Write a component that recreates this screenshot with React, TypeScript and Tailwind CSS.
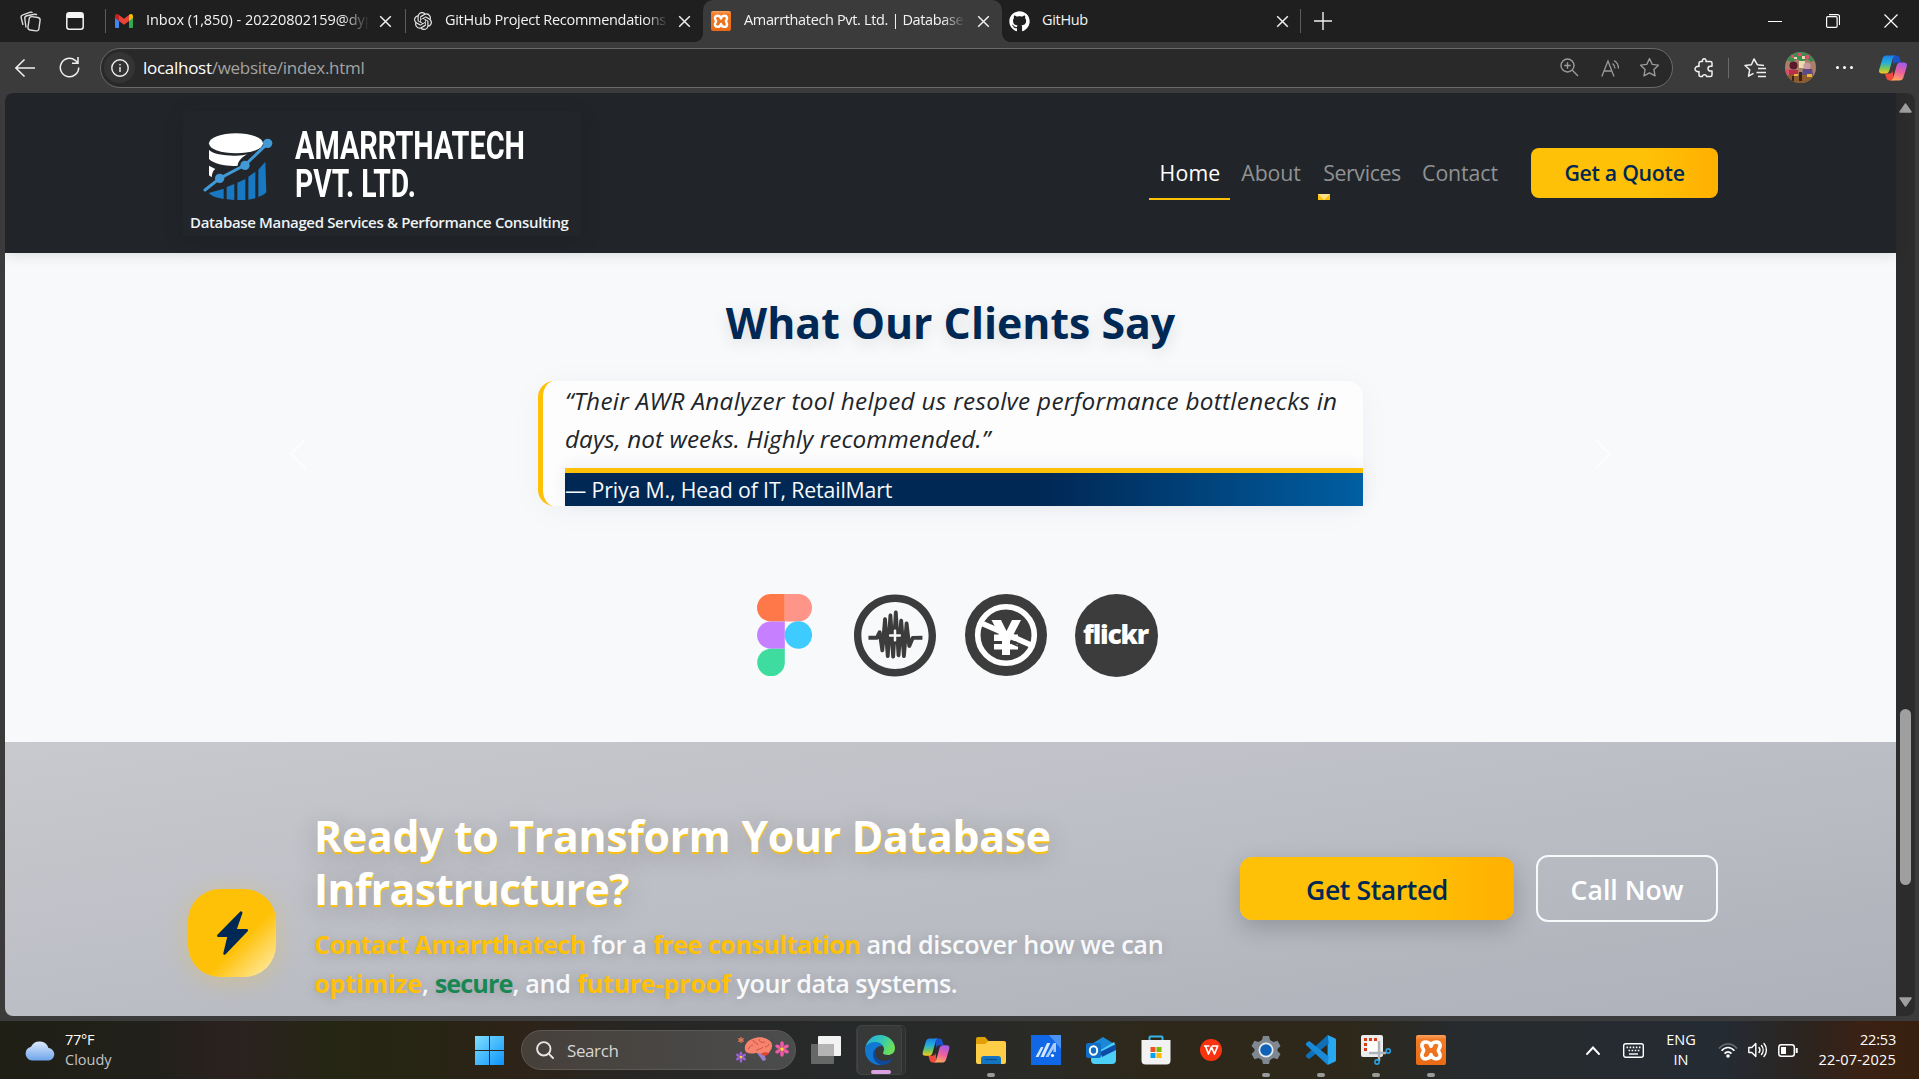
import type { ReactNode } from 'react';
import { FaCreativeCommonsSamplingPlus, FaGithub } from 'react-icons/fa';
import { SiOpenai } from 'react-icons/si';

const CloseX = ({ className = '' }: { className?: string }) => (
  <svg viewBox="0 0 13 13" className={`h-[13px] w-[13px] shrink-0 ${className}`} fill="none" stroke="#f0f0f0" strokeWidth="1.5">
    <path d="M1.2 1.2 11.8 11.8M11.8 1.2 1.2 11.8" />
  </svg>
);

const Sep = ({ className = '' }: { className?: string }) => <div className={`h-6 w-px shrink-0 bg-[#5c5c5c] ${className}`} />;

const FadeTitle = ({ children, className = '' }: { children: ReactNode; className?: string }) => (
  <div className={`mb-[2px] shrink-0 overflow-hidden whitespace-nowrap text-[14.5px] leading-5 text-[#f3f3f3] ${className}`}>{children}</div>
);

const Xampp = ({ className = '' }: { className?: string }) => (
  <div className={`shrink-0 rounded-[2px] bg-linear-to-b from-[#f9a25f] via-[#f47a24] via-15% to-[#e96a14] ${className}`}>
    <svg viewBox="0 0 30 30" className="h-full w-full" fill="none" stroke="#fff" strokeWidth="3.6" strokeLinejoin="round">
      <path d="M15 11.3C14.2 6.4 7 5.4 5.9 10c-.5 2.300 1.700 3.800 1.700 5.400s-2.200 3.100-1.700 5.400c1.100 4.600 8.300 3.600 9.100-1.300.8 4.900 8 5.900 9.100 1.300.5-2.300-1.700-3.800-1.700-5.400s2.200-3.100 1.700-5.400C23 5.400 15.800 6.400 15 11.300z" />
    </svg>
  </div>
);

const Copilot = ({ className = '' }: { className?: string }) => (
  <svg viewBox="0 0 28 26" className={`shrink-0 ${className}`}>
    <defs>
      <linearGradient id="cpa" x1="0" y1="0" x2="0" y2="1">
        <stop offset="0" stopColor="#1c7fe6" />
        <stop offset=".4" stopColor="#23b0d8" />
        <stop offset=".72" stopColor="#7cc758" />
        <stop offset="1" stopColor="#ffc61a" />
      </linearGradient>
      <linearGradient id="cpb" x1=".6" y1="0" x2=".3" y2="1">
        <stop offset="0" stopColor="#a45be8" />
        <stop offset=".5" stopColor="#ee5f9c" />
        <stop offset="1" stopColor="#ffab5c" />
      </linearGradient>
    </defs>
    <path d="M13 0.500h4.500c1.800 0 2.600 1 3.200 2.800L22 7.500h-4c-2 0-3 .9-3.500 2.800z" fill="#1b51c9" />
    <path d="M15 25.500h-4.500c-1.800 0-2.600-1-3.200-2.800L6 18.500h4c2 0 3-.9 3.500-2.800z" fill="#f0493e" />
    <path d="M7.500 0.500h9c-1.800.3-2.500 1.600-3 3.400L10.500 15c-.7 2.400-1.800 3.500-4 3.500H3c-2.600 0-3.500-1.600-2.700-4.200L3.500 3.700C4.200 1.500 5.300.5 7.500.5z" fill="url(#cpa)" />
    <path d="M20.500 25.500h-9c1.800-.3 2.500-1.600 3-3.400L17.500 11c.7-2.400 1.800-3.500 4-3.500H25c2.600 0 3.500 1.600 2.700 4.200l-3.200 10.600c-.7 2.200-1.800 3.200-4 3.200z" fill="url(#cpb)" />
  </svg>
);

function TabStrip() {
  return (
    <div className="flex h-[42px] items-center bg-[#1f1f1f] pl-5 pr-5">
      <svg viewBox="0 0 22 21" className="h-[21px] w-[22px] shrink-0" fill="none" stroke="#dcdcdc" strokeWidth="1.4" strokeLinejoin="round">
        <rect x="8.500" y="6" width="11" height="13.500" rx="2.500" transform="rotate(8 14 13)" />
        <path d="M6 16.500 4.800 7.500a2.500 2.500 0 0 1 2-2.800l8-1.500a2 2 0 0 1 2 1" />
        <path d="M3 14 1.200 6.800a2.500 2.500 0 0 1 1.700-3L10.500 1.200a2 2 0 0 1 2 .6" />
      </svg>
      <svg viewBox="0 0 18 18" className="ml-6 h-[18px] w-[18px] shrink-0">
        <rect x=".8" y=".8" width="16.400" height="16.400" rx="2.500" fill="none" stroke="#f4f4f4" strokeWidth="1.5" />
        <path d="M1 6V3a2 2 0 0 1 2-2h12a2 2 0 0 1 2 2v3z" fill="#f4f4f4" />
      </svg>
      <Sep className="ml-[21px]" />
      <svg viewBox="0 0 18 14" className="ml-[9px] h-[14px] w-[18px] shrink-0">
        <path d="M0 2v10.700C0 13.400.6 14 1.300 14H4V6.500z" fill="#4285f4" />
        <path d="M18 2v10.700c0 .7-.6 1.300-1.300 1.300H14V6.500z" fill="#34a853" />
        <path d="M14 1v6l4-3V2.200C18 .3 16-.5 14.700.500z" fill="#fbbc04" />
        <path d="M4 7V1l5 3.800L14 1v6L9 10.800z" fill="#ea4335" />
        <path d="M0 2.200V4l4 3V1L3.300.5C2-.5 0 .3 0 2.200z" fill="#c5221f" />
      </svg>
      <FadeTitle className="ml-[13px] w-[223px] tracking-[-0.04px] mask-r-from-88% mask-r-to-100%">Inbox (1,850) - 20220802159@dyp</FadeTitle>
      <CloseX className="ml-[10px]" />
      <Sep className="ml-[13px]" />
      <SiOpenai className="ml-2 h-[18px] w-[18px] shrink-0 text-[#e8e8e8]" />
      <FadeTitle className="ml-[13px] w-[223px] tracking-[-0.29px] mask-r-from-90% mask-r-to-100%">GitHub Project Recommendations</FadeTitle>
      <CloseX className="ml-[10px]" />
      <div className="relative ml-[12px] flex h-full w-[299px] shrink-0 items-center rounded-t-[10px] bg-[#3b3b3b] pl-2">
        <div className="absolute -left-2 bottom-0 h-2 w-2 bg-[radial-gradient(circle_at_0_0,#1f1f1f_7.5px,#3b3b3b_8px)]" />
        <div className="absolute -right-2 bottom-0 h-2 w-2 bg-[radial-gradient(circle_at_100%_0,#1f1f1f_7.5px,#3b3b3b_8px)]" />
        <Xampp className="h-5 w-5" />
        <FadeTitle className="ml-[13px] w-[221px] tracking-[-0.35px] mask-r-from-90% mask-r-to-100%">Amarrthatech Pvt. Ltd. | Database</FadeTitle>
        <CloseX className="ml-[12px]" />
      </div>
      <FaGithub className="ml-[7px] h-[21px] w-[21px] shrink-0 text-white" />
      <FadeTitle className="ml-[12px] w-[223px] tracking-[-0.32px]">GitHub</FadeTitle>
      <CloseX className="ml-[11px]" />
      <Sep className="ml-[11px]" />
      <svg viewBox="0 0 18 18" className="ml-[13px] h-[18px] w-[18px] shrink-0" stroke="#f0f0f0" strokeWidth="1.4">
        <path d="M9 0v18M0 9h18" />
      </svg>
      <div className="ml-auto flex items-center gap-[44px] pr-px">
        <div className="h-px w-[14px] bg-white" />
        <svg viewBox="0 0 14 14" className="h-[14px] w-[14px]" fill="none" stroke="#fff" strokeWidth="1.2">
          <rect x=".6" y="2.600" width="10.500" height="10.800" rx="1.200" />
          <path d="M3 .6h8.500a2 2 0 0 1 2 2V11" />
        </svg>
        <svg viewBox="0 0 14 14" className="h-[14px] w-[14px]" stroke="#fff" strokeWidth="1.2">
          <path d="M.5.5l13 13M13.500.5l-13 13" />
        </svg>
      </div>
    </div>
  );
}

const STAR = 'M10 1.500l2.600 5.500 5.900.8-4.300 4.200 1.100 6L10 15.100 4.700 18l1.100-6L1.500 7.800 7.400 7z';

function Toolbar() {
  return (
    <div className="flex h-[51px] items-center bg-[#3b3b3b] pl-[15px]">
      <svg viewBox="0 0 20 18" className="h-[18px] w-5 shrink-0" fill="none" stroke="#f0f0f0" strokeWidth="1.5">
        <path d="M20 9H1M9.500.5.9 9l8.600 8.500" />
      </svg>
      <svg viewBox="0 0 21 21" className="ml-[24px] h-[21px] w-[21px] shrink-0" fill="none" stroke="#f0f0f0" strokeWidth="1.5">
        <path d="M19.700 10.500a9.200 9.200 0 1 1-3.500-7.200L19 6M19 0v6.200h-6" />
      </svg>
      <div className="ml-[20px] flex h-10 w-[1573px] shrink-0 items-center rounded-full border border-[#6a6a6a] bg-[#292929] pl-[3px] pr-[12px]">
        <div className="flex h-[31px] w-[31px] items-center justify-center rounded-full bg-[#343434]">
          <svg viewBox="0 0 18 18" className="h-[18px] w-[18px]" fill="none" stroke="#f0f0f0" strokeWidth="1.4">
            <circle cx="9" cy="9" r="8.200" />
            <path d="M9 8v5M9 5v1.500" />
          </svg>
        </div>
        <div className="ml-2 text-[17px] leading-6 tracking-[-0.28px] text-[#a3a3a3]">
          <span className="text-white">localhost</span>/website/index.html
        </div>
        <svg viewBox="0 0 19 19" className="ml-auto h-[19px] w-[19px]" fill="none" stroke="#9a9a9a" strokeWidth="1.4">
          <circle cx="7.500" cy="7.500" r="6.500" />
          <path d="M12.300 12.300 18 18M7.500 4.300v6.400M4.300 7.500h6.400" />
        </svg>
        <svg viewBox="0 0 20 18" className="ml-[22px] h-[18px] w-5" fill="none" stroke="#9a9a9a" strokeWidth="1.3">
          <path d="M.8 17.500 7 2l6 15.500M3 12h8M11.500 4.500a6 6 0 0 1 2.500 5M13 1.500c3 1.800 4.500 4.500 4.500 8" />
        </svg>
        <svg viewBox="0 0 20 20" className="ml-[18px] h-[21px] w-[21px]" fill="none" stroke="#9a9a9a" strokeWidth="1.3" strokeLinejoin="round">
          <path d={STAR} />
        </svg>
      </div>
      <svg viewBox="0 0 20 20" className="ml-[21px] h-[20px] w-[20px] shrink-0" fill="none" stroke="#f0f0f0" strokeWidth="1.5" strokeLinejoin="round">
        <path d="M7 3.500h1.500c-.5-1.500.3-2.700 1.700-2.700s2.200 1.200 1.700 2.700h4.600a1.500 1.500 0 0 1 1.500 1.500v3.300h-1.600a2.400 2.400 0 0 0 0 4.800H18V17a1.500 1.500 0 0 1-1.500 1.500h-4c.2-1-.7-1.700-2-1.700s-2.200.7-2 1.700H6.500A1.500 1.500 0 0 1 5 17v-3.500c-2 .5-4-.6-4-2.500s2-3 4-2.500V5.300c0-1.100.9-1.800 2-1.800z" />
      </svg>
      <div className="ml-[14px] h-5 w-px bg-[#6a6a6a]" />
      <svg viewBox="0 0 22 20" className="ml-[15px] h-5 w-[22px] shrink-0" fill="none" stroke="#f0f0f0" strokeWidth="1.5" strokeLinejoin="round">
        <path d="M20 7.500l-6.700-.8L10 1 7.400 6.700 1 7.500l4.700 4.300-1.200 6.400 5-2.900M14 10.500h8M12.500 14.500h9.500M14 18.500h8" />
      </svg>
      <svg viewBox="0 0 31 31" className="ml-[19px] h-[31px] w-[31px] shrink-0 rounded-full">
        <path d="M0 0h31v31H0z" fill="#a8806a" />
        <path d="M0 0h31v8l-5 2-4-3-5 3-5-3-5 3-7-2z" fill="#3f8a50" />
        <path d="M6 3h3v3H6zM13 1h4v3h-4zM21 3h3v4h-3zM1 17h5v5H1z" fill="#d8506c" />
        <path d="M9 5h3v2H9zM17 4h3v3h-3zM14 9h6v7h-6z" fill="#e8dcae" />
        <circle cx="8.500" cy="13.500" r="4" fill="#5a1a2c" />
        <path d="M4 18h9v6H4z" fill="#b83048" />
        <circle cx="22" cy="14" r="3.600" fill="#c99aa0" />
        <path d="M18 17h9l1 6H17z" fill="#5c4a86" />
        <path d="M3 23h25v8H3z" fill="#8c5c2e" />
        <path d="M14 20h3v9h-3zM7 24h2v5H7z" fill="#3a2418" />
        <path d="M22 22h5v3h-5zM9 22h4v2H9z" fill="#e8b83c" />
      </svg>
      <div className="ml-[20px] flex gap-1">
        <div className="h-[3px] w-[3px] rounded-full bg-white" />
        <div className="h-[3px] w-[3px] rounded-full bg-white" />
        <div className="h-[3px] w-[3px] rounded-full bg-white" />
      </div>
      <Copilot className="ml-[26px] h-[26px] w-[28px]" />
    </div>
  );
}

function BrandLogo() {
  return (
    <div className="h-[125px] w-[398px] bg-[#222529] pt-5 shadow-[0_4px_20px_rgba(0,0,0,0.12)]">
      <div className="flex pl-[19px]">
        <svg viewBox="125 90 216 216" className="h-[72px] w-[72px] shrink-0">
          <ellipse cx="227" cy="127" rx="81" ry="30" fill="#fff" />
          <path d="M146 147c12 12 48 18 81 17 14 0 25-2 34-4-16 8-28 20-29 34-25 3-70-3-86-20z" fill="#fff" />
          <path d="M146 194l19 10c-8 5-10 15-11 25l-8-6z" fill="#fff" />
          <path d="M145 276l45-13v31c-20-3-37-9-45-18z" fill="#1878c2" />
          <path d="M199 258l23-9v48l-23-2zM231 245l24-11v63h-24zM264 227l21-15v80l-21 4zM294 206l21-24 3 92c-6 6-14 11-24 14z" fill="#1878c2" />
          <path d="M134 267l44-35 76-40 68-65" fill="none" stroke="#4199d6" strokeWidth="9" strokeLinecap="round" strokeLinejoin="round" />
          <g fill="#4199d6">
            <circle cx="178" cy="232" r="14" />
            <circle cx="254" cy="193" r="14" />
            <circle cx="322" cy="127" r="14" />
          </g>
        </svg>
        <div className="-mt-[4px] ml-[21px] font-[Roboto,sans-serif] font-bold text-white">
          <div className="w-[310px] origin-left scale-x-[0.74] whitespace-nowrap text-[39px] leading-[38px]">AMARRTHATECH</div>
          <div className="w-[310px] origin-left scale-x-[0.745] whitespace-nowrap text-[38px] leading-[38px]">PVT. LTD.</div>
        </div>
      </div>
      <div className="mt-[9px] pl-[7px] text-[15px] font-semibold leading-5 tracking-[-0.35px] whitespace-nowrap text-[#eef3f5]">
        Database Managed Services &amp; Performance Consulting
      </div>
    </div>
  );
}

function SiteHeader() {
  return (
    <header className="relative z-10 flex h-[160px] items-center rounded-tl-[8px] bg-[#212529] pl-[178px] pr-[178px] shadow-[0_2px_14px_rgba(0,0,0,0.12)]">
      <BrandLogo />
      <nav className="ml-auto flex text-center text-[21.3px] leading-[54px] text-[#909294]">
        <a className="h-[54px] w-[81px] border-b-2 border-[#ffc107] pl-px tracking-[0.2px] text-white">Home</a>
        <a className="w-[82px] tracking-[-0.11px]">About</a>
        <a className="relative w-[99px] pl-px tracking-[-0.37px]">
          Services
          <svg viewBox="0 0 12 6" className="absolute bottom-0 left-[6px] h-[6px] w-3">
            <path d="M0 0h12v6H0z" fill="#ffc107" />
            <path d="M0 0h12L6 6z" fill="#ffe08a" />
          </svg>
        </a>
        <a className="w-[97px] pl-px tracking-[-0.1px]">Contact</a>
      </nav>
      <button className="ml-[23px] h-[50px] w-[187px] rounded-[8px] bg-linear-to-r from-[#ffc107] from-60% to-[#ffb000] text-[21.3px] font-semibold leading-[50px] tracking-[-0.3px] text-[#002855]">
        Get a Quote
      </button>
    </header>
  );
}

function PartnerLogos() {
  return (
    <div className="mt-[88px] flex h-[82px] pl-[752px]">
      <svg viewBox="0 0 55 82" className="h-[82px] w-[55px]">
        <path d="M13.700 0H27.800v27.400H13.700a13.700 13.700 0 0 1 0-27.400z" fill="#ff7849" />
        <path d="M27.800 0h13.500a13.700 13.700 0 0 1 0 27.400H27.800z" fill="#ff9488" />
        <path d="M13.700 27.400H27.800v27.300H13.700a13.650 13.650 0 0 1 0-27.300z" fill="#c680ff" />
        <circle cx="41.400" cy="41" r="13.700" fill="#3ecbff" />
        <path d="M13.700 54.700H27.800v13.600a13.800 13.800 0 1 1-14.100-13.600z" fill="#3fdc9f" />
      </svg>
      <FaCreativeCommonsSamplingPlus className="ml-[42px] -mt-[1.5px] h-[85px] w-[82px] text-[#3c3c3c]" />
      <svg viewBox="0 0 82 82" className="ml-[29px] h-[82px] w-[82px]">
        <circle cx="41" cy="41" r="41" fill="#3c3c3c" />
        <path d="M26.500 26H36l5.500 11L47 26h9L48.500 40.500H53V47h-8v3h8v5.500h-8V61h-8v-5.500h-8V50h8v-3h-8v-6.500h5z" fill="#fff" />
        <path d="M45.500 46.500l20 8.500" stroke="#3c3c3c" strokeWidth="2" />
        <path d="M15 28.500 67 51.500" stroke="#fff" strokeWidth="5.6" />
        <path d="M46 49l7 3" stroke="#3c3c3c" strokeWidth="1.8" />
        <circle cx="41" cy="41" r="28.300" fill="none" stroke="#fff" strokeWidth="5.6" />
      </svg>
      <div className="ml-7 h-[83px] w-[83px] rounded-full bg-[#3c3c3c] pr-[2px] text-center text-[26.5px] font-extrabold leading-[81px] tracking-[-1.2px] text-white">flickr</div>
    </div>
  );
}

const Chevron = ({ d }: { d: string }) => (
  <svg viewBox="0 0 20 32" className="h-8 w-5 opacity-80" fill="none" stroke="#fff" strokeWidth="1.8" strokeLinecap="round">
    <path d={d} />
  </svg>
);

function Testimonials() {
  return (
    <section className="h-[489px] bg-[#f8f9fb] pt-[44px]">
      <h2 className="text-center text-[42.8px] font-bold leading-[52px] text-[#002855] [text-shadow:0_4px_16px_rgba(0,0,0,0.12)]">
        What Our Clients Say
      </h2>
      <div className="mt-[32px] flex h-[125px] items-center">
        <div className="ml-[283px] pt-5">
          <Chevron d="M17 2 3 16l14 14" />
        </div>
        <blockquote className="ml-[230px] w-[825px] rounded-[16px] border-l-[5px] border-[#ffc107] bg-[#fdfdfe] pl-[22px] pt-px text-[24.3px] leading-[38px] text-[#212529] shadow-[0_4px_32px_rgba(0,40,85,0.04)]">
          <p className="whitespace-nowrap italic">
            <span className="block tracking-[0.29px]">“Their AWR Analyzer tool helped us resolve performance bottlenecks in</span>
            <span className="block tracking-[0.07px]">days, not weeks. Highly recommended.”</span>
          </p>
          <footer className="mt-[10px] h-[38px] border-t-[5px] border-[#ffc107] bg-linear-to-r from-[#002855] from-60% to-[#005fa3] text-[21.3px] leading-[33px] tracking-[-0.15px] text-[#f8f9fa] shadow-[0_-2px_16px_rgba(0,40,85,0.08)]">
            — Priya M., Head of IT, RetailMart
          </footer>
        </blockquote>
        <div className="ml-[230px] pt-5">
          <Chevron d="M3 2l14 14L3 30" />
        </div>
      </div>
      <PartnerLogos />
    </section>
  );
}

function CallToAction() {
  return (
    <section className="flex h-[274px] bg-linear-to-br from-[#c8c9ce] via-[#bcbec5] to-[#aeb0ba] pl-[183px]">
      <div className="mt-[147px] flex h-[88px] w-[88px] shrink-0 items-center justify-center rounded-[32px] bg-[linear-gradient(135deg,#ffc107_60%,#fff0b8)] shadow-[0_4px_24px_rgba(255,193,7,0.25)]">
        <svg viewBox="0 0 31 44" className="h-11 w-[31px]">
          <path d="M24.500.4c.8.400 1.200 1 .9 1.900L19.900 18h9.600c1.300 0 1.900 1.300 1.200 2.300L8.600 43.300c-.9 1-2.500.5-2.300-1L10.200 26H1.500C.2 26-.4 24.700.4 23.700L22.800.9c.5-.6 1-.8 1.700-.5z" fill="#002855" />
        </svg>
      </div>
      <div className="ml-[38px] mt-[67px] w-[926px] shrink-0 whitespace-nowrap">
        <h2 className="text-[42.7px] font-bold leading-[53px] text-white [text-shadow:0_2px_1px_#ffc107,0_6px_28px_rgba(0,0,0,0.22)]">
          <span className="block tracking-[-0.25px]">Ready to Transform Your Database</span>
          <span className="block tracking-[-0.65px]">Infrastructure?</span>
        </h2>
        <p className="mt-[10px] text-[25.2px] font-semibold leading-[39px] tracking-[-0.32px] text-[#f8f9fa] [text-shadow:0_2px_12px_rgba(0,0,0,0.18)]">
          <span className="font-bold tracking-[-0.58px] text-[#ffc107]">Contact Amarrthatech</span> for a{' '}
          <span className="font-bold tracking-[-0.52px] text-[#ffc107]">free consultation</span> and discover how we can
          <br />
          <span className="font-bold tracking-[-0.23px] text-[#ffc107]">optimize</span>,{' '}
          <span className="font-bold tracking-[-0.89px] text-[#198754]">secure</span>, and{' '}
          <span className="font-bold tracking-[-0.25px] text-[#ffc107]">future-proof</span>
          <span className="tracking-[-0.48px]"> your data systems.</span>
        </p>
      </div>
      <div className="mt-[113px] flex items-start gap-[22px] font-semibold">
        <button className="mt-[2px] h-[63px] w-[274px] rounded-[12px] bg-linear-to-r from-[#ffc107] from-60% to-[#ffb000] pt-[3px] text-[26.6px] leading-[60px] tracking-[-0.42px] text-[#002855] shadow-[0_8px_24px_rgba(0,0,0,0.2)]">
          Get Started
        </button>
        <button className="h-[67px] w-[182px] rounded-[12px] border-2 border-[#f8f9fa] pt-[3px] text-[26.6px] leading-[60px] text-white">
          Call Now
        </button>
      </div>
    </section>
  );
}

const TaskIcon = ({ children, dot = false }: { children: ReactNode; dot?: boolean }) => (
  <div className="relative flex h-[54px] w-[55px] shrink-0 items-center justify-center">
    {children}
    {dot && <div className="absolute bottom-0 h-[4px] w-2 rounded-full bg-[#9a9a9a]" />}
  </div>
);

function TaskIcons() {
  return (
    <div className="flex">
      <TaskIcon dot>
        <svg viewBox="0 0 30 27" className="h-[27px] w-[30px]">
          <path d="M0 2a2 2 0 0 1 2-2h7l4 4.500-3 4H0z" fill="#dfa008" />
          <path d="M0 7h9l3.500-3H28a2 2 0 0 1 2 2v19a2 2 0 0 1-2 2H2a2 2 0 0 1-2-2z" fill="#ffce47" />
          <path d="M5 27v-5a3 3 0 0 1 3-3h14a3 3 0 0 1 3 3v5z" fill="#1275c4" />
          <path d="M9 22.500h12" stroke="#0b4f8c" strokeWidth="1.2" />
        </svg>
      </TaskIcon>
      <TaskIcon>
        <svg viewBox="0 0 30 30" className="h-[30px] w-[30px]">
          <path d="M0 0h30v30H0z" fill="#1168e6" />
          <path d="M18 0h12v14z" fill="#4a93f5" />
          <path d="M4.500 22 10 12h2.500L7.500 22zM9.500 22 16 8h3.300L12.800 22z" fill="#d5e6ff" />
          <path d="M14.500 22 22.500 8H25v9h-2.500v-3.500L17.500 22z" fill="#a9cbfc" />
          <circle cx="21.500" cy="20.500" r="1.600" fill="#fff" />
        </svg>
      </TaskIcon>
      <TaskIcon>
        <svg viewBox="0 0 30 27" className="h-[27px] w-[30px]">
          <path d="M4 8 17 0l13 8v6H4z" fill="#1b87d6" />
          <path d="M13 14 28 5l2 4v14a4 4 0 0 1-4 4H9a4 4 0 0 1-4-4v-8z" fill="#4cd0f7" />
          <path d="M14 15 30 7v6L16 20z" fill="#0c4ba8" />
          <rect x="0" y="6" width="15" height="15" rx="2" fill="#0f6fc6" />
          <ellipse cx="7.500" cy="13.500" rx="3.700" ry="4.200" fill="none" stroke="#fff" strokeWidth="2" />
        </svg>
      </TaskIcon>
      <TaskIcon>
        <svg viewBox="0 0 30 30" className="h-[30px] w-[30px]">
          <path d="M8.500 6V2.500a1 1 0 0 1 1-1h11a1 1 0 0 1 1 1V6" fill="none" stroke="#35b4e8" strokeWidth="2" />
          <path d="M.5 5h29v20.500a4 4 0 0 1-4 4h-21a4 4 0 0 1-4-4z" fill="#f2f2f2" />
          <path d="M9.500 12h5v5h-5z" fill="#f25022" />
          <path d="M15.500 12h5v5h-5z" fill="#7fba00" />
          <path d="M9.500 18h5v5h-5z" fill="#00a4ef" />
          <path d="M15.500 18h5v5h-5z" fill="#ffb900" />
        </svg>
      </TaskIcon>
      <TaskIcon>
        <svg viewBox="0 0 22 22" className="h-[22px] w-[22px]">
          <circle cx="11" cy="11" r="11" fill="#f9330f" />
          <path d="M4 7h5.500M5.500 7l3 8 3-7 3 7 3.200-8H12" fill="none" stroke="#fff" strokeWidth="1.7" strokeLinejoin="round" />
        </svg>
      </TaskIcon>
      <TaskIcon dot>
        <svg viewBox="0 0 30 30" className="h-[30px] w-[30px]">
          <path d="M12 1h6l1 4 3.500 2 4-1.200 3 5.200-3 3v2l3 3-3 5.200-4-1.200L19 25l-1 4h-6l-1-4-3.500-2-4 1.200-3-5.200 3-3v-2l-3-3 3-5.200 4 1.200L11 5z" fill="#7f8790" />
          <circle cx="15" cy="15" r="7.500" fill="#e9ecef" />
          <circle cx="15" cy="15" r="5.800" fill="#0f62b5" />
        </svg>
      </TaskIcon>
      <TaskIcon dot>
        <svg viewBox="0 0 100 100" className="h-[30px] w-[30px]">
          <path d="M72 0 96 11a6 6 0 0 1 4 6v66a6 6 0 0 1-4 6L72 100z" fill="#29a8f2" />
          <path d="M72 0 76 28 13 78a5 5 0 0 1-6 0l-6-5a5 5 0 0 1 0-7z" fill="#0f6fb8" />
          <path d="M72 100 76 72 13 22a5 5 0 0 0-6 0l-6 5a5 5 0 0 0 0 7z" fill="#1b8ad6" />
        </svg>
      </TaskIcon>
      <TaskIcon dot>
        <svg viewBox="0 0 30 30" className="h-[30px] w-[30px]" fill="none">
          <rect x="0" y="0" width="22" height="22" rx="2" fill="#ececec" />
          <path d="M4.500 16V4.500H17" stroke="#d83b16" strokeWidth="3" strokeDasharray="3 2" />
          <path d="M6.500 16.500V6.500H17v11z" fill="#fff" />
          <path d="M18 6v20M8 18h17" stroke="#aeb4ba" strokeWidth="2.5" />
          <circle cx="27.200" cy="16" r="2.100" stroke="#2b9fe0" strokeWidth="1.6" />
          <circle cx="16" cy="27" r="2.100" stroke="#2b9fe0" strokeWidth="1.6" />
        </svg>
      </TaskIcon>
      <TaskIcon dot>
        <Xampp className="h-[30px] w-[30px]" />
      </TaskIcon>
    </div>
  );
}

const Flower = ({ x, y, r, c }: { x: number; y: number; r: number; c: string }) => (
  <g transform={`translate(${x} ${y})`}>
    {[0, 60, 120, 180, 240, 300].map((a) => (
      <ellipse key={a} cx="0" cy={-r * 0.62} rx={r * 0.24} ry={r * 0.4} fill={c} transform={`rotate(${a})`} />
    ))}
    <circle r={r * 0.25} fill="#ffd23a" />
  </g>
);

function Taskbar() {
  return (
    <div className="flex h-[58px] items-center bg-[linear-gradient(90deg,#201f16_0%,#21201a_8%,#2b2220_12%,#262615_17%,#272514_22%,#2e2318_27%,#272624_33%,#272a2b_45%,#2a2a26_54%,#2d2819_60%,#2d2819_70%,#272b2e_76%,#252b33_90%,#2b241f_94%,#3a2114_97%,#38200f_100%)] text-white">
      <svg viewBox="0 0 32 22" className="ml-6 h-[22px] w-8 shrink-0">
        <defs>
          <linearGradient id="cloud" x1="0" y1="0" x2="0" y2="1">
            <stop offset="0" stopColor="#dce9fb" />
            <stop offset="1" stopColor="#6ea4ec" />
          </linearGradient>
        </defs>
        <path d="M8 21.500a7 7 0 0 1-1-13.800A9.500 9.500 0 0 1 24.500 9 6.300 6.300 0 0 1 25 21.500z" fill="url(#cloud)" />
      </svg>
      <div className="ml-[9px] w-[410px] shrink-0 text-[14.5px] leading-5">
        <div className="tracking-[-0.3px]">77°F</div>
        <div className="text-[#c4c4c4]">Cloudy</div>
      </div>
      <svg viewBox="0 0 29 29" className="h-[29px] w-[29px] shrink-0">
        <defs>
          <linearGradient id="win" x1="0" y1="0" x2="1" y2="1">
            <stop offset="0" stopColor="#7fe0ff" />
            <stop offset="1" stopColor="#0c93fb" />
          </linearGradient>
        </defs>
        <path d="M0 0h14v14H0zM15 0h14v14H15zM0 15h14v14H0zM15 15h14v14H15z" fill="url(#win)" />
      </svg>
      <div className="ml-[17px] flex h-10 w-[275px] shrink-0 items-center rounded-full border border-[#5d5a56] bg-linear-to-r from-[#46403a] to-[#4b4c4d] pl-[14px]">
        <svg viewBox="0 0 18 18" className="h-[18px] w-[18px]" fill="none" stroke="#e6e6e6" strokeWidth="1.9" strokeLinecap="round">
          <circle cx="7.800" cy="7.800" r="6.700" />
          <path d="m12.700 12.700 4.300 4.300" />
        </svg>
        <div className="ml-[13px] pt-px text-[17px] leading-6 tracking-[-0.4px] text-[#d6d6d6]">Search</div>
        <svg viewBox="0 0 54 28" className="ml-auto mr-[6px] h-7 w-[54px]">
          <path d="M22 17l6 8 3-1-2-8z" fill="#9a7fc8" />
          <path d="M10 14c-1-5 2-9 7-11 7-3 15-2 19 3 2 3 1 7-1 9-1 2-3 5-7 4-2-2-4-2-7-2-5 1-10 1-11-3z" fill="#f5836d" />
          <path d="M13 13c2-1 2-4 5-4M18 4c0 3 4 2 5 5M24 3c0 3 3 4 6 3M21 15c2-3 5-1 7-4M30 11c2 0 3-1 4-3" fill="none" stroke="#cf5340" strokeWidth="1" />
          <path d="M26 18c2-2 6-2 8-1-1 3-5 4-8 1z" fill="#e2432e" />
          <Flower x={6} y={4} r={3.2} c="#e0705a" />
          <Flower x={6} y={21} r={5.5} c="#9b62d9" />
          <Flower x={47} y={13} r={7.5} c="#ee5aa6" />
        </svg>
      </div>
      <svg viewBox="0 0 30 28" className="ml-[15px] h-7 w-[30px] shrink-0">
        <rect x="7" y="0" width="23" height="20" rx="1" fill="#f3f3f3" />
        <rect x="0" y="8" width="23" height="20" rx="1" fill="#6f6f6f" fillOpacity=".88" />
        <path d="M7 8h16v12H7z" fill="#b4b4b4" />
      </svg>
      <div className="relative ml-[15px] flex h-[50px] w-[50px] shrink-0 items-center rounded-[5px] border border-[#3d3e3e] bg-[#2e3030]">
        <div className="flex h-[50px] w-[45px] items-center justify-center rounded-[5px] border border-[#424343] bg-[#373838]">
          <svg viewBox="0 0 30 30" className="h-[30px] w-[30px]">
            <defs>
              <linearGradient id="edgeTop" x1="0" y1="0" x2="1" y2=".4">
                <stop offset="0" stopColor="#2aa7e8" />
                <stop offset=".6" stopColor="#36c8b0" />
                <stop offset="1" stopColor="#6adf5a" />
              </linearGradient>
            </defs>
            <path d="M0 15C1 6 7 0 15 0c9 0 15 7 15 13 0 5-4 7-7 7s-5-1-5-2 1-1.500 1-4c0-3-3-6-8-6-6 0-10 3-11 7z" fill="url(#edgeTop)" />
            <path d="M0 15c0-5 5-8 10-8 4 0 7 2 8 4-5-1-9 3-9 8 0 6 4 10 9 11-1 .1-2 0-3 0C6 30 0 23 0 15z" fill="#1077d3" />
            <path d="M12 13c-4 5-1 13 7 13 3 0 6-1 9-3-3 5-7 7-11 7-6-1-9-6-9-10 0-3 1-6 4-7z" fill="#0d4a9e" />
          </svg>
        </div>
        <div className="absolute bottom-0 left-[14px] h-1 w-5 rounded-full bg-[#d9a1e2]" />
      </div>
      <Copilot className="ml-4 h-[25px] w-7" />
      <div className="ml-[13.5px]">
        <TaskIcons />
      </div>
      <div className="ml-auto flex items-center pr-[23px]">
        <svg viewBox="0 0 14 9" className="h-[9px] w-[14px]" fill="none" stroke="#fff" strokeWidth="1.9" strokeLinecap="round">
          <path d="m1 8 6-6.500L13 8" />
        </svg>
        <svg viewBox="0 0 21 15" className="ml-[23px] h-[15px] w-[21px]" fill="none" stroke="#fff" strokeWidth="1.4">
          <rect x=".7" y=".7" width="19.600" height="13.600" rx="2" />
          <path d="M3.500 4.300h14M5.500 7.500h11" strokeDasharray="1.6 1.5" strokeWidth="1.7" />
          <path d="M6 11h9" />
        </svg>
        <div className="ml-[21px] w-[32px] text-center text-[14.5px] leading-5">
          ENG
          <br />
          IN
        </div>
        <svg viewBox="0 0 20 16" className="ml-[21px] h-4 w-5" fill="none" strokeWidth="1.7">
          <path d="M1 6.500c5-6 13-6 18 0" stroke="#6b6e72" />
          <path d="M3.600 8.800c3.700-4.400 9.100-4.400 12.800 0M6.500 11.600c2.200-2.400 4.800-2.400 7 0" stroke="#fff" />
          <circle cx="10" cy="14" r="1.800" fill="#fff" />
        </svg>
        <svg viewBox="0 0 20 16" className="ml-[10px] h-4 w-5" fill="none" stroke="#fff" strokeWidth="1.4" strokeLinejoin="round" strokeLinecap="round">
          <path d="M.8 5.500h3l4-4v13l-4-4h-3zM11 5.500a4 4 0 0 1 0 5M13.500 3.500a7 7 0 0 1 0 9M16 1.500a10 10 0 0 1 0 13" />
        </svg>
        <svg viewBox="0 0 20 13" className="ml-[10px] h-[13px] w-5" fill="none" stroke="#fff" strokeWidth="1.5">
          <rect x=".8" y=".8" width="15.500" height="11.400" rx="2.500" />
          <path d="M18.700 4v5" strokeWidth="2" />
          <rect x="3" y="3" width="5" height="7" fill="#fff" stroke="none" />
        </svg>
        <div className="ml-[18px] w-20 whitespace-nowrap text-right text-[14.5px] leading-5">
          <div className="tracking-[-0.19px]">22:53</div>
          <div className="tracking-[0.19px]">22-07-2025</div>
        </div>
      </div>
    </div>
  );
}

function Scrollbar() {
  return (
    <div className="flex w-[19px] flex-col items-center rounded-r-[8px] bg-[#2c2c2c] pb-[9px] pt-[10px]">
      <svg viewBox="0 0 13 10" className="h-[10px] w-[13px]">
        <path d="M6.500 1 12 9H1z" fill="#9f9f9f" stroke="#9f9f9f" strokeWidth="1.5" strokeLinejoin="round" />
      </svg>
      <div className="mt-[596px] h-[176px] w-[11px] rounded-full bg-[#9f9f9f]" />
      <svg viewBox="0 0 13 10" className="mt-auto h-[10px] w-[13px]">
        <path d="M6.500 9 12 1H1z" fill="#9f9f9f" stroke="#9f9f9f" strokeWidth="1.5" strokeLinejoin="round" />
      </svg>
    </div>
  );
}

export default function App() {
  return (
    <div className="flex h-[1079px] w-[1919px] flex-col overflow-hidden bg-[#3b3b3b] font-['Open_Sans','Noto_Sans',sans-serif]">
      <TabStrip />
      <Toolbar />
      <div className="mx-[5px] mb-[5px] flex h-[923px] w-[1910px] shrink-0 overflow-hidden rounded-[8px]">
        <div className="w-[1891px] shrink-0">
          <SiteHeader />
          <Testimonials />
          <CallToAction />
        </div>
        <Scrollbar />
      </div>
      <Taskbar />
    </div>
  );
}
